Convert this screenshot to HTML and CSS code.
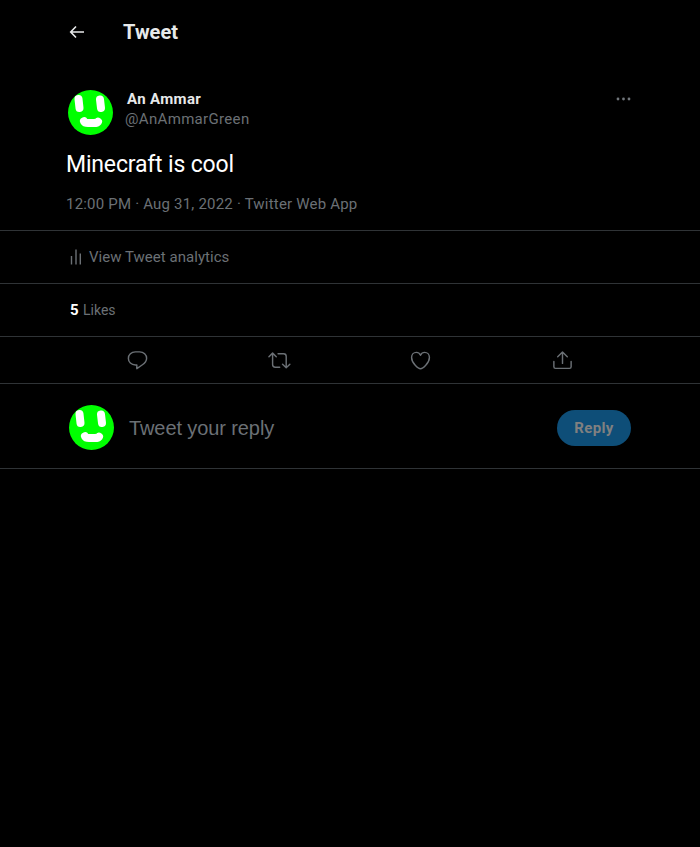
FILE: index.html
```html
<!DOCTYPE html>
<html lang="en">
<head>
<meta charset="utf-8">
<title>Tweet</title>
<link rel="stylesheet" href="styles.css">
</head>
<body>
<svg class="defs" width="0" height="0" aria-hidden="true">
  <symbol id="face" viewBox="0 0 45 45">
    <circle cx="22.5" cy="22.5" r="22.5" fill="#00ff00"/>
    <path d="M10.500 9l1 9M32 9.500l1 8.500M16 31.200q1 1.800 4 1.800h6q3 0 4-1.300" fill="none" stroke="#fff" stroke-width="8" stroke-linecap="round" stroke-linejoin="round"/>
  </symbol>
</svg>
<header class="top">
  <svg class="back" viewBox="0 0 16 14"><path d="M7 1.500L1.700 7 7 12.500M2 7h13"/></svg>
  <h1 class="title">Tweet</h1>
</header>
<main>
  <article class="tweet">
    <div class="author">
      <svg class="avatar"><use href="#face"/></svg>
      <div class="names">
        <div class="name"><span>An Ammar</span></div>
        <div class="handle"><span>@AnAmmarGreen</span></div>
      </div>
      <svg class="more" viewBox="0 0 15 4"><circle cx="2" cy="2" r="1.400"/><circle cx="7.500" cy="2" r="1.400"/><circle cx="13" cy="2" r="1.400"/></svg>
    </div>
    <p class="body"><span>Minecraft is cool</span></p>
    <p class="meta"><span>12:00 PM · Aug 31, 2022 · Twitter Web App</span></p>
  </article>
  <div class="row analytics">
    <svg class="bars" viewBox="0 0 12 16"><path d="M1.500 7v8.500M6 .5v15M10.300 4.500v11"/></svg>
    <span>View Tweet analytics</span>
  </div>
  <div class="row likes"><b>5</b><span>Likes</span></div>
  <div class="actions">
    <svg viewBox="0 0 24 24"><path d="M9.800 3h4.400c4.300 0 7.300 3 7.300 6.700 0 3.100-1.800 5.300-4.700 7L11.300 20.500v-3.900H9.800c-4.300 0-7.300-3-7.300-6.800S5.500 3 9.800 3z"/></svg>
    <svg viewBox="0 0 24 24"><path d="M1 8l3.800-3.700L8.600 8M4.800 4.500v11.700c0 1.800 1 2.800 2.800 2.800h4.600M10.500 5h5.700c1.800 0 2.800 1 2.800 2.800v11.500M15.200 16l3.800 3.600 3.800-3.600"/></svg>
    <svg viewBox="0 0 24 24"><path d="M12 20.700C9.800 20.700 2.700 14.800 2.700 8.900 2.700 5.700 5 3.500 7.700 3.500c2 0 3.400 1.100 4.300 3 .9-1.900 2.300-3 4.300-3 2.700 0 5 2.200 5 5.400 0 5.900-7.100 11.800-9.300 11.800z"/></svg>
    <svg viewBox="0 0 24 24"><path d="M12 15V3.500M7 8l5-4.800L17 8M3 13v5.500c0 1.100.6 1.700 1.700 1.700h14.600c1.100 0 1.700-.6 1.700-1.700V13"/></svg>
  </div>
  <div class="reply">
    <svg class="avatar"><use href="#face"/></svg>
    <span class="placeholder">Tweet your reply</span>
    <button class="send">Reply</button>
  </div>
</main>
</body>
</html>
```
FILE: styles.css
```css
* { box-sizing: border-box; }
body { margin: 0; min-height: 100vh; background: #000; color: #e7e9ea; font-family: Roboto, "Liberation Sans", sans-serif; }
h1, p { margin: 0; }
svg { display: block; flex: none; }
.defs { position: absolute; }
.top { height: 64px; display: flex; align-items: center; padding-left: 69px; }
.back { width: 16px; height: 14px; fill: none; stroke: #e7e9ea; stroke-width: 1.6; }
.title { margin-left: 38px; font-size: 20px; line-height: 24px; font-weight: 700; }
.tweet { height: 167px; padding: 26px 69px 0 68px; border-bottom: 1px solid #2f3336; }
.author { display: flex; height: 45px; }
.avatar { width: 45px; height: 45px; }
.names { margin-left: 12px; flex: 1; }
.name { padding-left: 2px; font-size: 15px; line-height: 18px; font-weight: 700; letter-spacing: .35px; }
.handle { color: #6b7075; font-size: 15px; line-height: 22px; letter-spacing: .33px; }
.more { width: 15px; height: 4px; margin-top: 7px; fill: #71767b; }
.body { margin: 16px 0 0 -2px; font-size: 23px; line-height: 28px; letter-spacing: -.17px; color: #fff; }
.meta { margin: 15px 0 0 -2px; font-size: 15px; line-height: 20px; letter-spacing: .2px; color: #6b7075; }
.row { height: 53px; display: flex; align-items: center; border-bottom: 1px solid #2f3336; color: #6b7075; }
.analytics { padding-left: 70px; font-size: 15px; letter-spacing: .03px; }
.bars { width: 12px; height: 16px; margin-right: 7px; fill: none; stroke: #6b7075; stroke-width: 1.4; }
.likes { padding: 0 0 1px 70px; font-size: 14px; gap: 4px; }
.likes b { width: 9px; color: #fff; font-size: 15px; }
.actions { height: 47px; display: flex; justify-content: space-between; align-items: center; padding: 0 126px; border-bottom: 1px solid #2f3336; }
.actions svg { width: 23px; height: 23px; fill: none; stroke: #6b7075; stroke-width: 1.5; stroke-linecap: round; stroke-linejoin: round; }
.reply { height: 85px; display: flex; align-items: center; padding: 3px 69px 0; border-bottom: 1px solid #2f3336; }
.placeholder { flex: 1; margin-left: 15px; padding-top: 2px; font-family: "Liberation Sans", sans-serif; font-size: 20px; letter-spacing: -.1px; color: #6b7075; }
.send { width: 74px; height: 36px; padding: 0; border: 0; border-radius: 18px; background: #0e4e78; color: #808080; font: 700 15px Roboto, sans-serif; letter-spacing: .35px; }
```
